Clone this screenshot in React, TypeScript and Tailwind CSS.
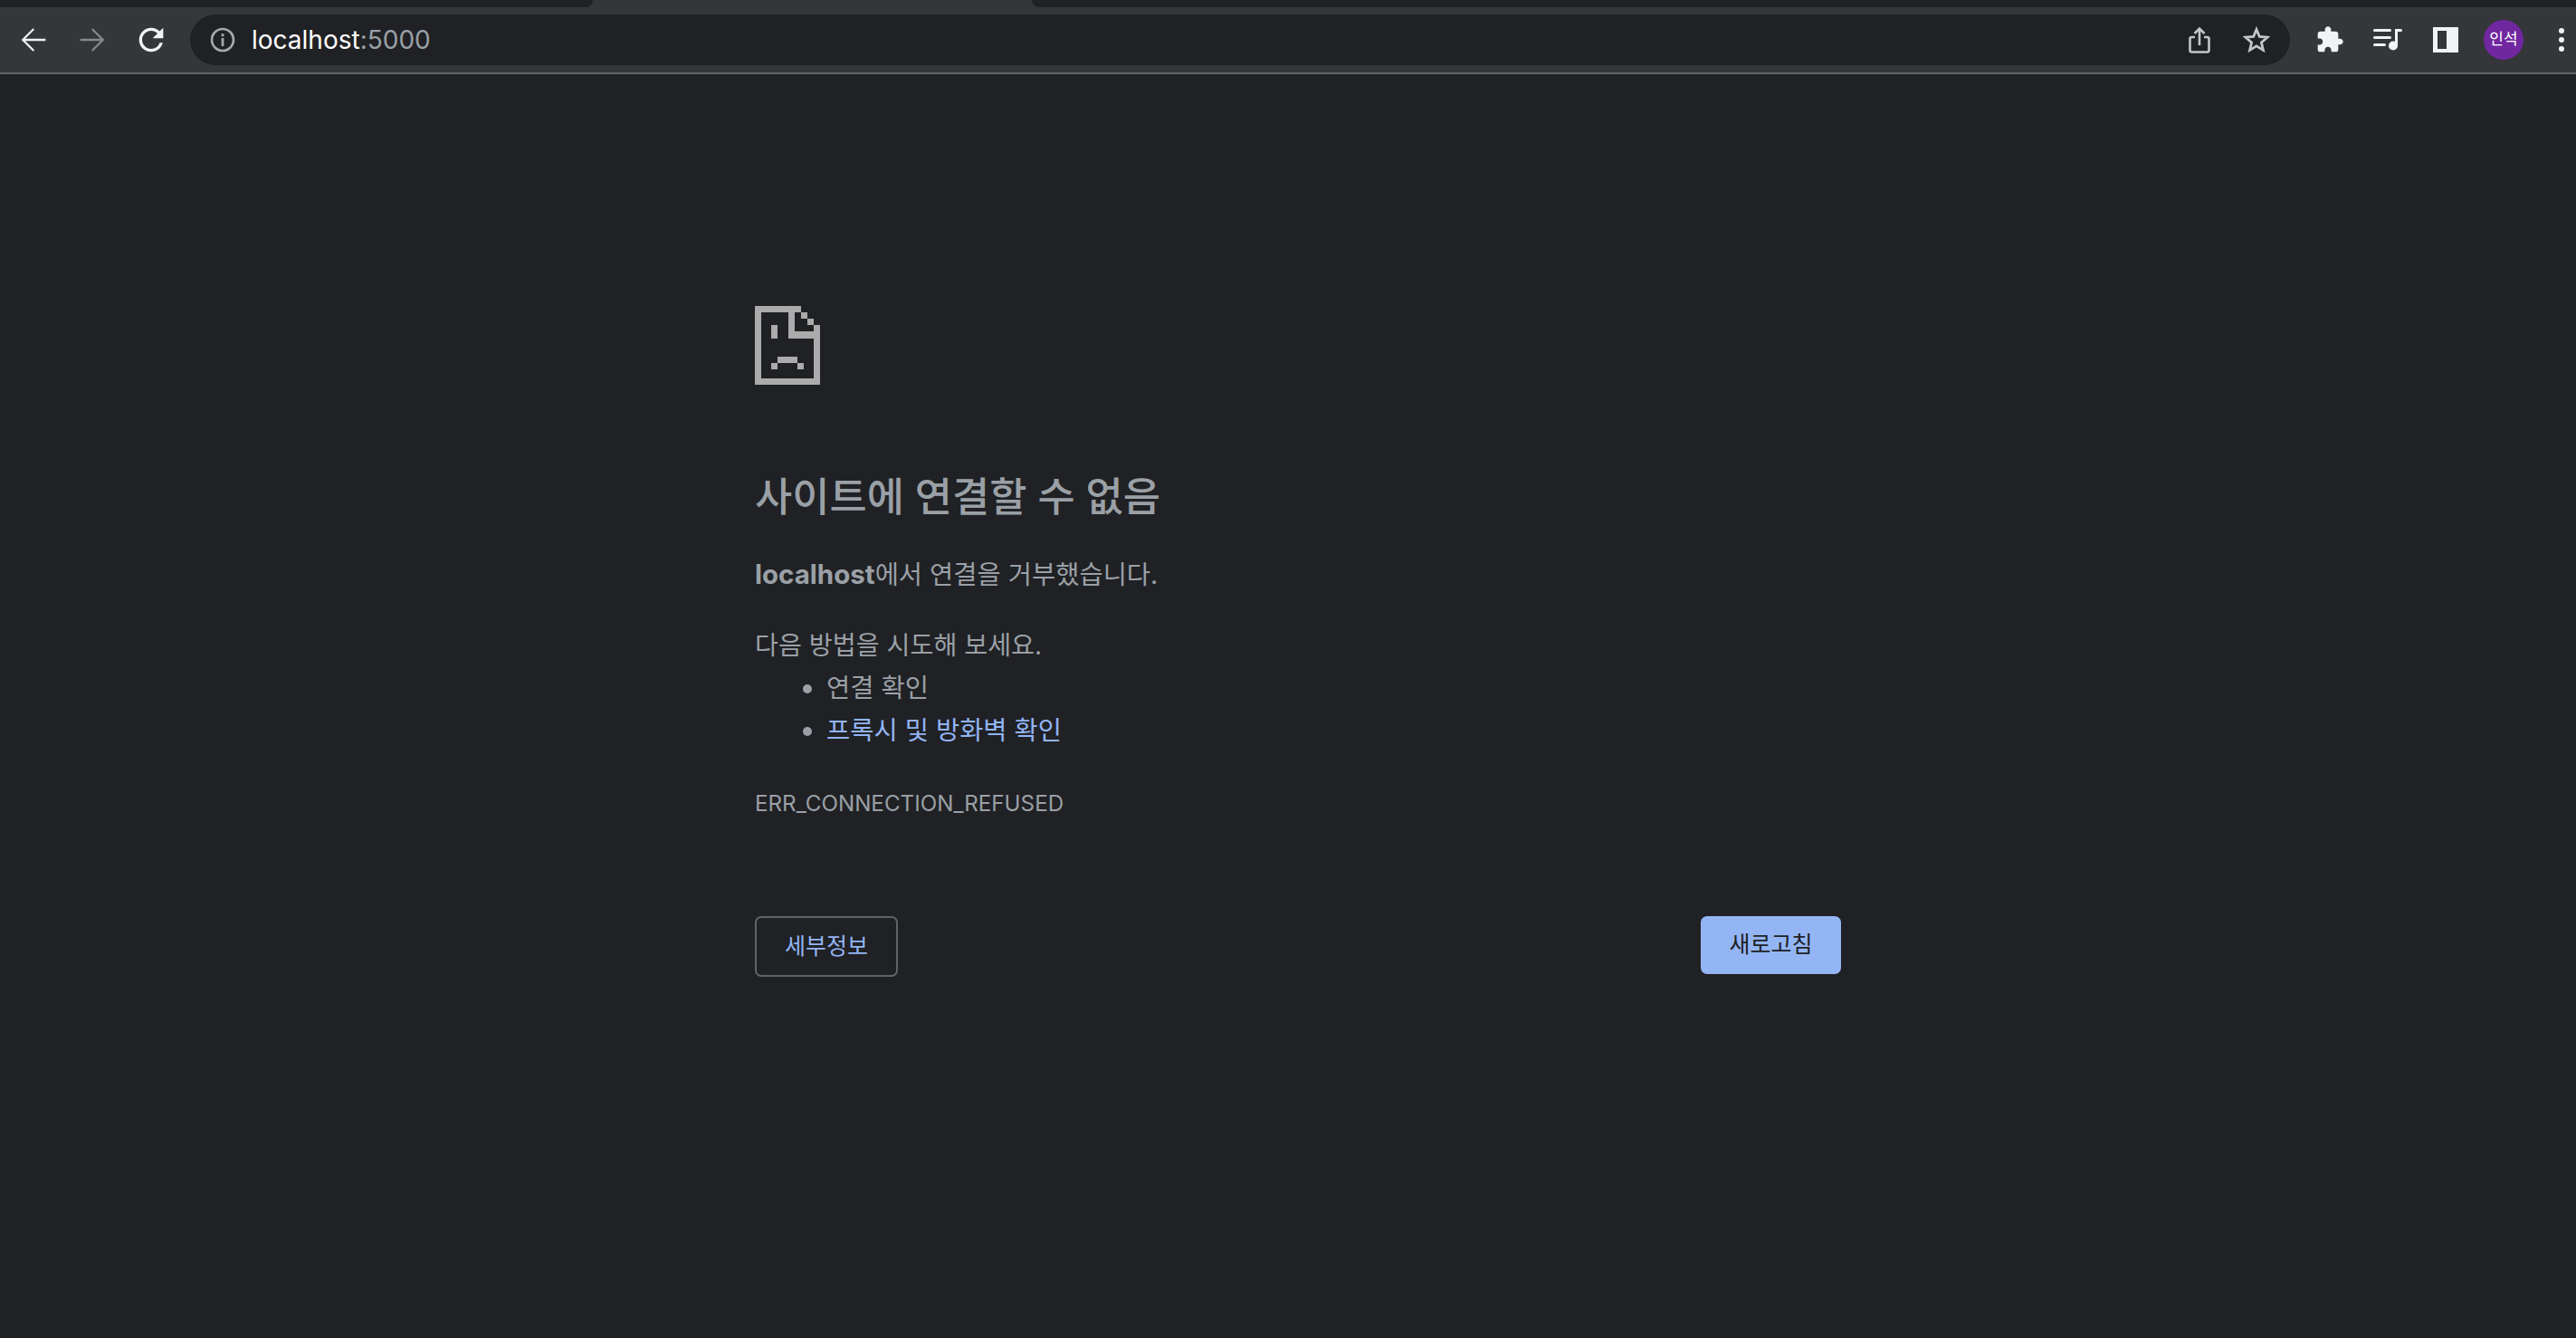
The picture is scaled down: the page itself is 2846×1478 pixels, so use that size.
const sans = "font-['Inter','Noto_Sans_CJK_KR',sans-serif]";

function Sad() {
  return (
    <svg width="72" height="87" viewBox="0 0 72 87" fill="#ababab" shapeRendering="crispEdges">
      <rect x="0" y="0" width="7" height="87" />
      <rect x="0" y="0" width="51" height="7" />
      <rect x="0" y="80" width="72" height="7" />
      <rect x="65" y="21" width="7" height="66" />
      <rect x="51" y="7" width="7" height="7" />
      <rect x="58" y="14" width="7" height="7" />
      <rect x="37" y="7" width="7" height="29" />
      <rect x="37" y="28" width="35" height="8" />
      <rect x="18" y="21" width="7" height="15" />
      <rect x="25" y="56" width="22" height="7" />
      <rect x="18" y="63" width="7" height="7" />
      <rect x="47" y="63" width="7" height="7" />
    </svg>
  );
}

function Arrow({ color, flip }: { color: string; flip?: boolean }) {
  return (
    <svg width="40" height="40" viewBox="0 0 24 24" fill={color} className={flip ? "-scale-x-100" : ""}>
      <path d="M20 11.3H6.6l6-6L11.7 4.3 4 12l7.7 7.7 1-1-6.1-6H20v-1.4z" />
    </svg>
  );
}

export default function App() {
  return (
    <div className={`min-h-[1478px] bg-[#202124] ${sans}`}>
      <div className="flex h-2 bg-[#35363a]">
        <div className="w-[655px] rounded-br-lg bg-[#202124]" />
        <div className="w-[485px]" />
        <div className="flex-1 rounded-bl-lg bg-[#202124]" />
      </div>

      <div className="flex h-[72px] items-center bg-[#35363a] pl-[17px]">
        <Arrow color="#f1f3f4" />
        <div className="ml-[25px]">
          <Arrow color="#85888c" flip />
        </div>
        <svg className="ml-[25px]" width="40" height="40" viewBox="0 0 24 24" fill="#f1f3f4">
          <path d="M17.65 6.35A7.958 7.958 0 0 0 12 4c-4.42 0-7.99 3.58-7.99 8s3.57 8 7.99 8c3.73 0 6.84-2.55 7.73-6h-2.08A5.99 5.99 0 0 1 12 18c-3.31 0-6-2.69-6-6s2.69-6 6-6c1.66 0 3.14.69 4.22 1.78L13 11h7V4l-2.35 2.35z" />
        </svg>

        <div className="ml-[23px] flex h-14 w-[2320px] items-center rounded-full bg-[#202124] pl-[22px] pr-[22px]">
          <svg width="28" height="28" viewBox="0 0 28 28" fill="none">
            <circle cx="14" cy="14" r="12" stroke="#a6a9ad" strokeWidth="2.6" />
            <rect x="12.6" y="12" width="2.8" height="9" fill="#a6a9ad" />
            <rect x="12.6" y="7.2" width="2.8" height="3" fill="#a6a9ad" />
          </svg>
          <div className="ml-[18px] text-[28px] leading-none text-white">
            localhost<span className="text-[#9aa0a6]">:5000</span>
          </div>
          <svg className="ml-auto" width="24" height="30" viewBox="0 0 24 30" fill="none" stroke="#c4c5c7" strokeWidth="2.6">
            <path d="M7 12H3.5A2 2 0 0 0 1.5 14v12.5a2 2 0 0 0 2 2h17a2 2 0 0 0 2-2V14a2 2 0 0 0-2-2H17" />
            <path d="M12 21V3M6.5 8 12 2.5 17.5 8" />
          </svg>
          <svg className="ml-9" width="30" height="30" viewBox="0 0 30 30" fill="none" stroke="#c4c5c7" strokeWidth="2.8">
            <path d="M15 3.5l3.3 8 8.7.7-6.6 5.7 2 8.5-7.4-4.5-7.4 4.5 2-8.5-6.6-5.7 8.7-.7z" />
          </svg>
        </div>

        <svg className="ml-[28px]" width="32" height="32" viewBox="0 0 24 24" fill="#f1f3f4">
          <path d="M20.5 11H19V7c0-1.1-.9-2-2-2h-4V3.5C13 2.12 11.88 1 10.5 1S8 2.12 8 3.5V5H4c-1.1 0-1.99.9-1.99 2v3.8H3.5c1.49 0 2.7 1.21 2.7 2.7s-1.21 2.7-2.7 2.7H2V20c0 1.1.9 2 2 2h3.8v-1.5c0-1.49 1.21-2.7 2.7-2.7 1.49 0 2.7 1.21 2.7 2.7V22H17c1.1 0 2-.9 2-2v-4h1.5c1.38 0 2.5-1.12 2.5-2.5S21.88 11 20.5 11z" />
        </svg>
        <svg className="ml-8" width="32" height="24" viewBox="0 0 32 24" fill="#f1f3f4">
          <rect x="0" y="0" width="20" height="3" rx="1.5" />
          <rect x="0" y="8" width="20" height="3" rx="1.5" />
          <rect x="0" y="16" width="14" height="3" rx="1.5" />
          <rect x="24" y="0" width="8" height="3" rx="1.5" />
          <rect x="24" y="0" width="3" height="19" />
          <circle cx="22" cy="18.5" r="5" />
        </svg>
        <div className="ml-[34px] flex h-7 w-7 bg-[#f1f3f4] py-[4px] pl-[5px]">
          <div className="h-full w-[10px] bg-[#35363a]" />
        </div>
        <div className="ml-7 flex h-11 w-11 items-center justify-center rounded-full bg-[#7027a0] text-[17px] text-white">
          인석
        </div>
        <div className="ml-[39px] flex flex-col gap-[4px]">
          <div className="h-[6px] w-[6px] rounded-full bg-[#f1f3f4]" />
          <div className="h-[6px] w-[6px] rounded-full bg-[#f1f3f4]" />
          <div className="h-[6px] w-[6px] rounded-full bg-[#f1f3f4]" />
        </div>
      </div>
      <div className="h-[2px] bg-[#5f6368]" />

      <main className="ml-[834px] w-[1200px] pt-[256px] text-[28.5px] text-[#9aa0a6]">
        <Sad />
        <h1 className="mt-[99px] text-[44.8px] font-medium leading-[50px] text-[#9aa0a6]">사이트에 연결할 수 없음</h1>
        <p className="mt-[40px] leading-10">
          <strong className="text-[29.5px] font-bold">localhost</strong>에서 연결을 거부했습니다.
        </p>
        <p className="mt-[34px] text-[28.2px] leading-[48px]">다음 방법을 시도해 보세요.</p>
        <ul className="-mt-[2px] list-disc pl-[79px] leading-[48px] marker:text-[30px]">
          <li className="h-[47px]">연결 확인</li>
          <li className="h-[47px] text-[#92b5f4] marker:text-[#9aa0a6]">프록시 및 방화벽 확인</li>
        </ul>
        <div className="mt-[41px] text-[24.2px] leading-9">ERR_CONNECTION_REFUSED</div>
        <div className="mt-[106px] flex items-start justify-between">
          <button className="h-[67px] w-[158px] rounded-[7px] border-2 border-[#5f6368] text-[25px] text-[#92b5f4]">세부정보</button>
          <button className="h-16 w-[155px] rounded-[7px] bg-[#93b5f4] text-[25px] text-[#202124]">새로고침</button>
        </div>
      </main>
    </div>
  );
}
